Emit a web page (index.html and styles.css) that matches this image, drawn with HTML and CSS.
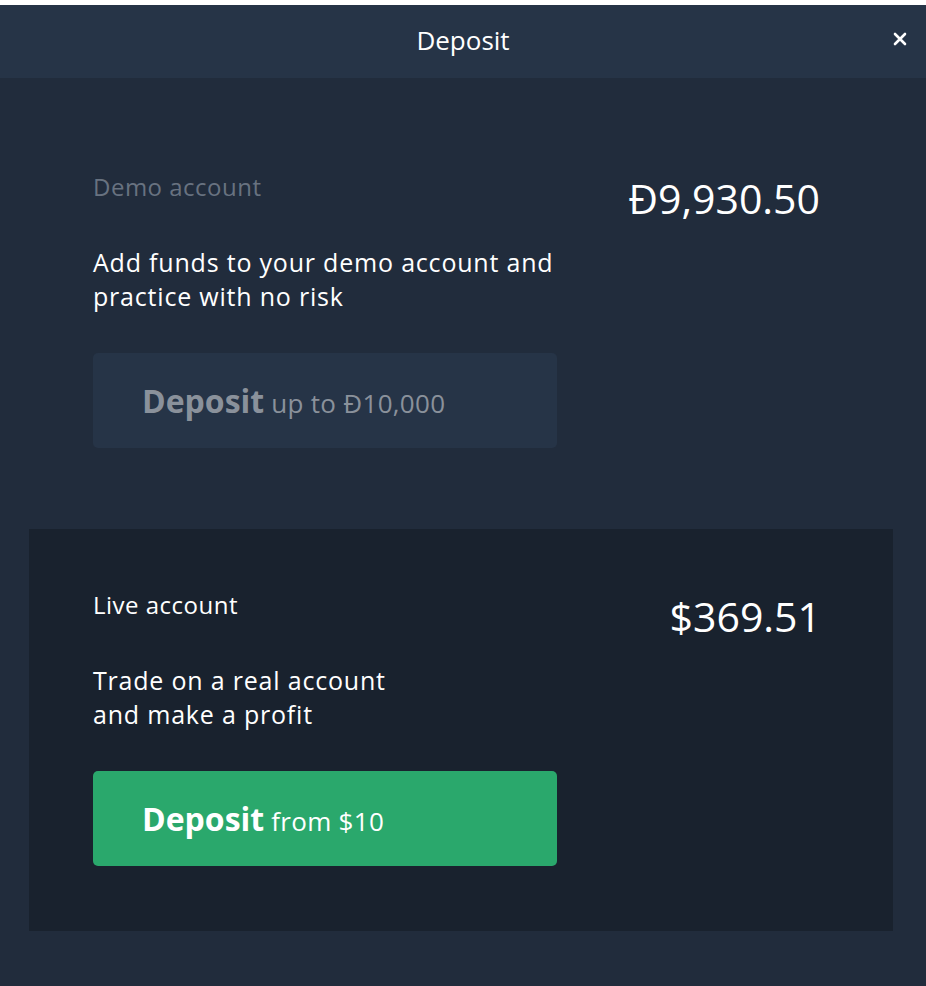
FILE: index.html
```html
<!DOCTYPE html>
<html lang="en">
  <head>
    <meta charset="UTF-8" />
    <meta name="viewport" content="width=device-width, initial-scale=1.0" />
    <title>Deposit</title>
    <link rel="stylesheet" href="styles.css">
  </head>
  <body>
    <div class="modal">
      <div class="modal-header">
        <span></span>
        <h2 class="modal-title">Deposit</h2>
        <button class="close" aria-label="Close">
          <svg width="14" height="14" viewBox="0 0 14 14">
            <path d="M2 2 L12 12 M12 2 L2 12" stroke="#ffffff" stroke-width="2.6" stroke-linecap="round" />
          </svg>
        </button>
      </div>

      <div class="account demo">
        <div class="account-info">
          <div class="account-label">Demo account</div>
          <p class="account-text">Add funds to your demo account and practice with no risk</p>
          <button class="deposit-btn demo-btn"><b>Deposit</b> up to Đ10,000</button>
        </div>
        <div class="balance">Đ9,930.50</div>
      </div>

      <div class="account live">
        <div class="account-info">
          <div class="account-label">Live account</div>
          <p class="account-text">Trade on a real account<br />and make a profit</p>
          <button class="deposit-btn live-btn"><b>Deposit</b> from $10</button>
        </div>
        <div class="balance">$369.51</div>
      </div>
    </div>
  </body>
</html>
```

FILE: styles.css
```css
body {
  margin: 0;
  background-color: #ffffff;
  font-family: "Open Sans", "Noto Sans", sans-serif;
  color: #ffffff;
}

.modal {
  margin-top: 5px;
  height: 981px;
  background-color: #212c3c;
}

.modal-header {
  display: grid;
  grid-template-columns: 1fr auto 1fr;
  align-items: center;
  height: 73px;
  background-color: #263447;
}

.modal-title {
  margin: 0 0 4px;
  font-size: 26px;
  font-weight: 400;
}

.close {
  justify-self: end;
  margin: 0 19px 5px 0;
  background: none;
  border: none;
  padding: 0;
  cursor: pointer;
  display: flex;
}

.account {
  display: grid;
  grid-template-columns: 470px 1fr;
  align-items: start;
}

.demo {
  padding: 94px 106px 81px 93px;
}

.live {
  margin: 0 33px 0 29px;
  padding: 61px 72px 65px 64px;
  background-color: #19222e;
}

.account-label {
  font-size: 24px;
  line-height: 30px;
  letter-spacing: 0.5px;
}

.demo .account-label {
  color: #687280;
}

.account-text {
  margin: 43px 0 40px;
  font-size: 25px;
  line-height: 34px;
  letter-spacing: 0.8px;
}

.balance {
  justify-self: end;
  font-size: 41px;
  line-height: 48px;
  margin-top: 2px;
}

.deposit-btn {
  display: block;
  width: 464px;
  height: 95px;
  padding: 0 0 0 49px;
  border: none;
  border-radius: 5px;
  text-align: left;
  font-family: inherit;
  font-size: 26px;
  letter-spacing: 0.3px;
  cursor: pointer;
}

.deposit-btn b {
  font-size: 32px;
  font-weight: 700;
  letter-spacing: 0;
}

.demo-btn {
  background-color: #263447;
  color: #8a919b;
}

.live-btn {
  background-color: #2aa86c;
  color: #ffffff;
}
```
